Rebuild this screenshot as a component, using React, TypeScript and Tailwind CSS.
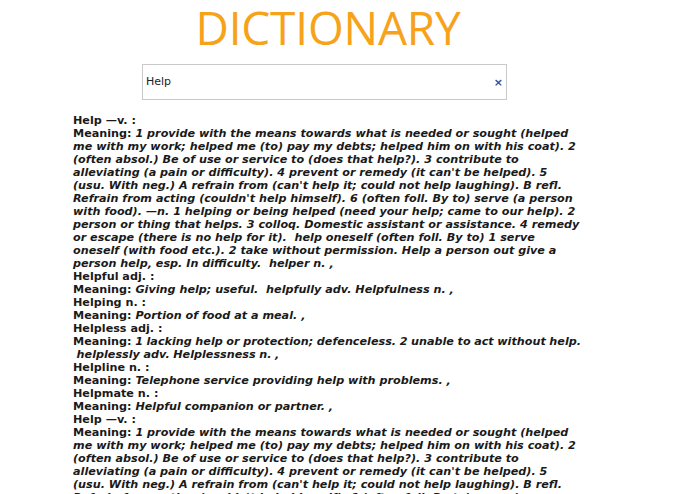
import React from "react";

type Entry = {
    word: string;
    meaning: string;
    tight?: boolean;
};

const HELP_MEANING =
    "1 provide with the means towards what is needed or sought (helped me with my work; helped me (to) pay my debts; helped him on with his coat). 2 (often absol.) Be of use or service to (does that help?). 3 contribute to alleviating (a pain or difficulty). 4 prevent or remedy (it can't be helped). 5 (usu. With neg.) A refrain from (can't help it; could not help laughing). B refl. Refrain from acting (couldn't help himself). 6 (often foll. By to) serve (a person with food). \u2014n. 1 helping or being helped (need your help; came to our help). 2 person or thing that helps. 3 colloq. Domestic assistant or assistance. 4 remedy or escape (there is no help for it).  help oneself (often foll. By to) 1 serve oneself (with food etc.). 2 take without permission. Help a person out give a person help, esp. In difficulty.  helper n. ,";

const entries: Entry[] = [
    { word: "Help \u2014v. :", meaning: HELP_MEANING },
    { word: "Helpful adj. :", meaning: "Giving help; useful.  helpfully adv. Helpfulness n. ," },
    { word: "Helping n. :", meaning: "Portion of food at a meal. ," },
    {
        word: "Helpless adj. :",
        meaning: "1 lacking help or protection; defenceless. 2 unable to act without help. \u00a0helplessly adv. Helplessness n. ,",
        tight: true,
    },
    { word: "Helpline n. :", meaning: "Telephone service providing help with problems. ," },
    { word: "Helpmate n. :", meaning: "Helpful companion or partner. ," },
    { word: "Help \u2014v. :", meaning: HELP_MEANING },
];

const App: React.FC = () => {
    return (
        <div className="min-h-[494px] bg-white" style={{ fontFamily: "'DejaVu Sans', Verdana, sans-serif" }}>
            <div className="ml-[142px] w-[372px]">
                <h1
                    className="text-center text-[46px] leading-[52px] font-normal text-[#f6a31b] pt-[1px] tracking-[-0.2px]"
                    style={{ fontFamily: "'Open Sans', sans-serif" }}
                >
                    DICTIONARY
                </h1>
                <div className="mt-[11px] flex items-center w-[365px] h-[36px] border border-[#c9c9c9] bg-white pl-[3px] pr-[3px]">
                    <input
                        className="flex-1 outline-none text-[11px] text-[#222] bg-transparent"
                        defaultValue="Help"
                    />
                    <span className="text-[11px] font-bold text-[#2f4f8f] leading-none">×</span>
                </div>
            </div>

            <div className="ml-[73px] w-[510px] mt-[14px] text-[11.2px] leading-[13px] font-bold text-[#1a1a1a]">
                {entries.map((entry, index) => (
                    <div key={index}>
                        <p>{entry.word}</p>
                        <p className={entry.tight ? "[word-spacing:-0.3px]" : ""}>
                            Meaning: <i className="whitespace-pre-wrap">{entry.meaning}</i>
                        </p>
                    </div>
                ))}
            </div>
        </div>
    );
};

export default App;
